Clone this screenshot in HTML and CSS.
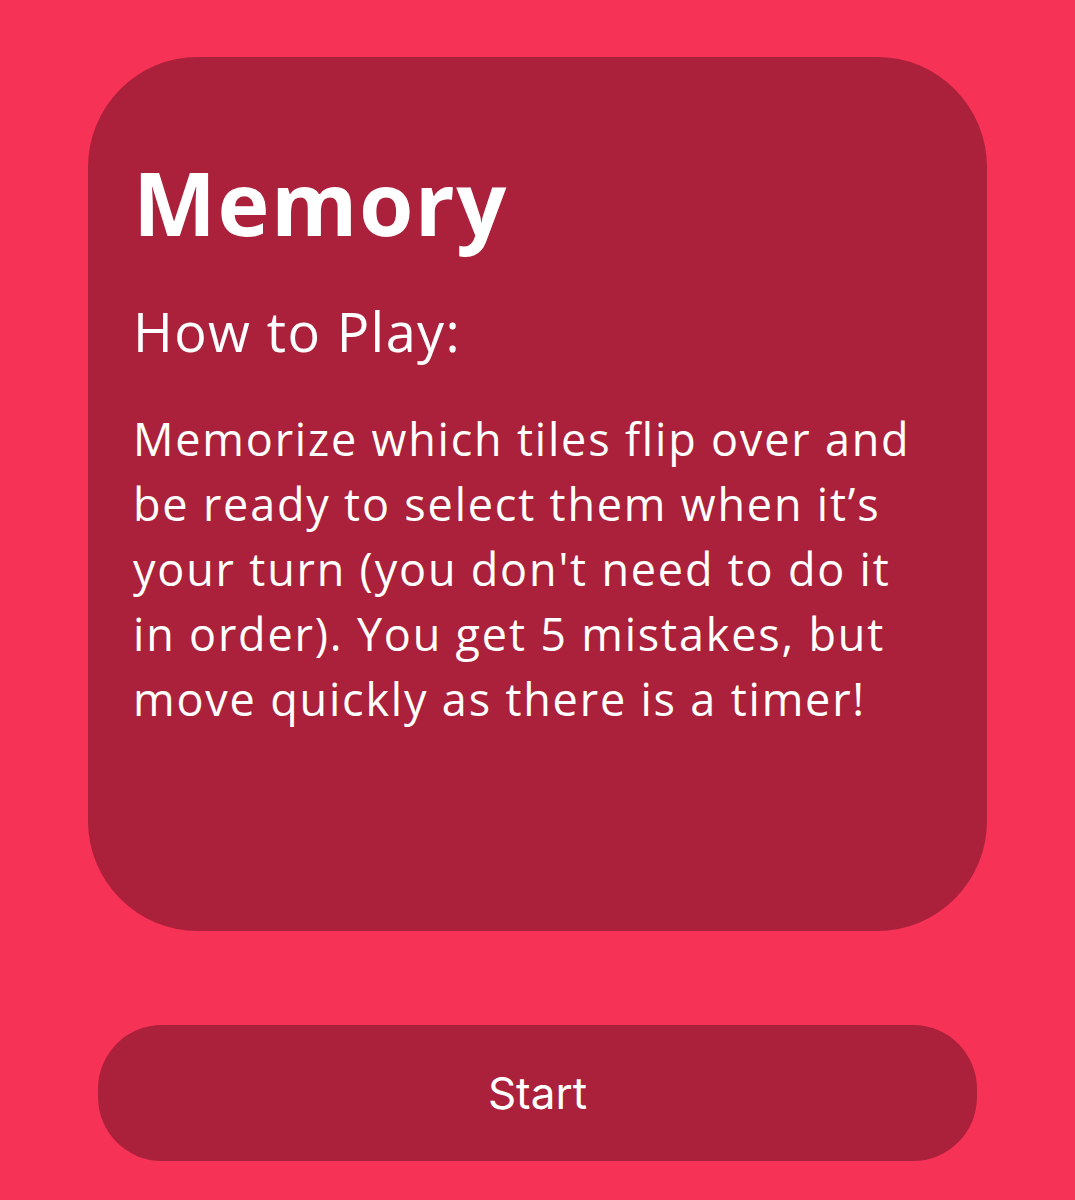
FILE: index.html
```html
<!DOCTYPE html>
<html lang="en">
<head>
    <meta charset="UTF-8">
    <meta name="viewport" content="width=device-width, initial-scale=1.0">
    <title>Memory</title>
    <link rel="stylesheet" href="styles.css">
</head>
<body>
    <div class="screen">
        <div class="card">
            <h1>Memory</h1>
            <h2>How to Play:</h2>
            <p>Memorize which tiles flip over and be ready to select them when it’s your turn (you don't need to do it in order). You get 5 mistakes, but move quickly as there is a timer!</p>
        </div>
        <button class="start-btn">Start</button>
    </div>
</body>
</html>
```

FILE: styles.css
```css
body {
    margin: 0;
    background-color: #f63256;
    font-family: "Open Sans", "DejaVu Sans", sans-serif;
    color: #fff;
}
.screen {
    padding: 57px 88px 0 88px;
    display: flex;
    flex-direction: column;
}
.card {
    background: #ab203a;
    border-radius: 110px;
    height: 874px;
    box-sizing: border-box;
    padding: 83px 45px 0 45px;
}
.card h1 {
    margin: 0;
    font-size: 88px;
    font-weight: 700;
    line-height: 124px;
    letter-spacing: 1.5px;
}
.card h2 {
    margin: 32px 0 0 0;
    font-size: 54px;
    font-weight: 400;
    line-height: 70px;
    letter-spacing: 1.4px;
}
.card p {
    margin: 40px 0 0 0;
    font-size: 45px;
    line-height: 65px;
    letter-spacing: 1.8px;
}
.start-btn {
    margin: 94px 10px 0 10px;
    height: 136px;
    border: none;
    border-radius: 64px;
    background: #ab203a;
    color: #fff;
    font-family: Inter, Roboto, sans-serif;
    font-size: 44px;
}
```
